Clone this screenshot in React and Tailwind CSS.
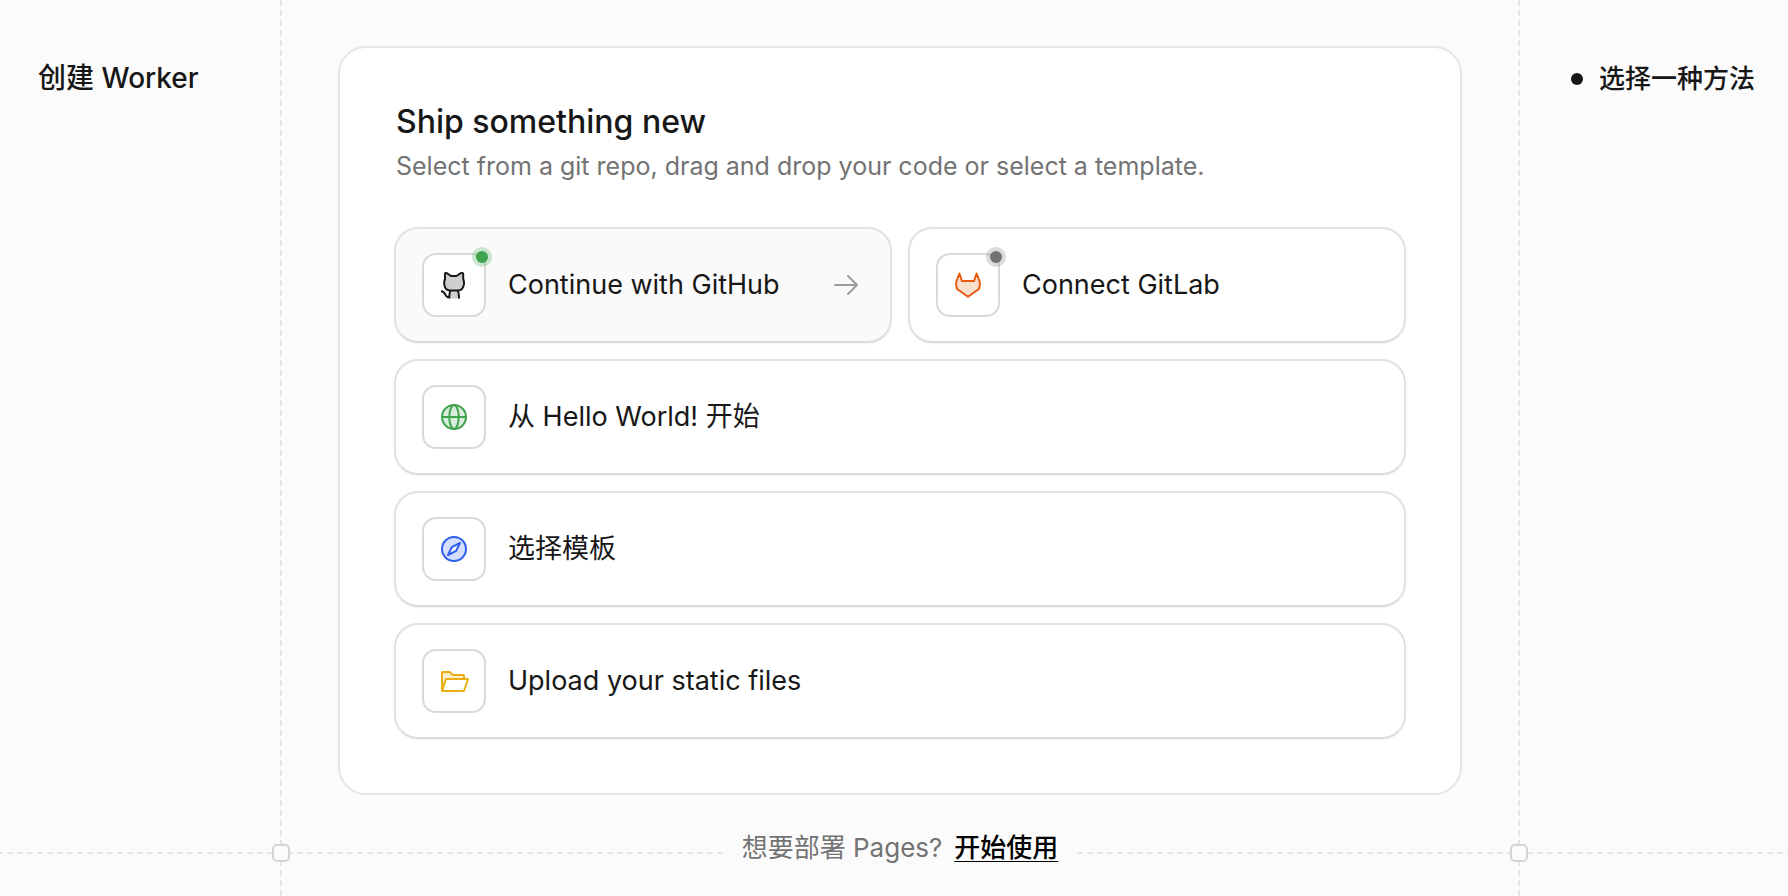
import React from "react";

function Drawing({ className, children }) {
  return (
    <svg viewBox="-16 -16 32 32" className={`size-8 ${className}`} fill="none" stroke="currentColor" strokeWidth="2" aria-hidden="true">
      {children}
    </svg>
  );
}

function CatIcon() {
  return (
    <Drawing className="text-[#171717]">
      <path d="M-4.5 5.5h9V13.500h-9z" fill="#cfcfcf" stroke="none" />
      <path
        d="M-9-11C-9-12.2-8.2-12.3-7.2-11.8L-3-9H2.500L6.8-11.8C8-12.3 9.200-12.2 9.200-11V-6C10-4.500 10.100-3 10-1C9.500 3.500 7 5.500 3.500 5.500H-3.500C-7 5.500-9.500 3.500-9.800-1C-9.900-3-9.800-4.500-9-6Z"
        fill="#cfcfcf"
        strokeLinejoin="round"
      />
      <path d="M-3.500 5.500C-4.500 7-4.700 9-4.700 13.500M3.500 5.500C4.700 7 5 9 5 13.500M-13 6.200C-7.500 6-10 12.500-4.700 12.500" />
    </Drawing>
  );
}

function FoxIcon() {
  return (
    <Drawing className="text-[#e8590c]">
      <path
        d="M-8.600-11.500L-11.600-3.500C-12.200-1-12 1.500-11 4L0 11.700L11 4C12 1.500 12.200-1 11.600-3.500L8.600-11.500L6-4H-6Z"
        fill="currentColor"
        fillOpacity="0.2"
        strokeLinejoin="round"
      />
    </Drawing>
  );
}

function GlobeIcon() {
  return (
    <Drawing className="text-[#3fa34d]">
      <circle r="12" fill="currentColor" fillOpacity="0.2" />
      <ellipse rx="4.700" ry="12" />
      <path d="M-12 0H12" />
    </Drawing>
  );
}

function CompassIcon() {
  return (
    <Drawing className="text-[#2f5fee]">
      <circle r="12" fill="currentColor" fillOpacity="0.2" />
      <path d="M6-6L2.200 1.800L-6 6L-2.200-1.800Z" fill="white" strokeLinejoin="round" />
    </Drawing>
  );
}

function FolderIcon() {
  return (
    <Drawing className="text-[#e8ae12]">
      <path d="M-12 10V-8.500C-12-8.800-11.800-9-11.500-9H-4.500L-1-6H9.500Q10-6 10-5.500V-2H-8Z" fill="currentColor" fillOpacity="0.2" stroke="none" />
      <path d="M-12 10V-8.500C-12-8.800-11.800-9-11.500-9H-4.500L-1-6H9.500Q10-6 10-5.500V-2M-12 10L-8-2H14L10 10Z" strokeLinejoin="round" />
    </Drawing>
  );
}

function ArrowIcon() {
  return (
    <Drawing className="ml-auto text-[#9b9b9b]">
      <path d="M-11 0H11M2-9L11 0L2 9" strokeLinecap="round" strokeLinejoin="round" />
    </Drawing>
  );
}

function Option({ icon, label, dot, highlighted }) {
  return (
    <button
      type="button"
      className={`flex items-center rounded-[24px] border-2 border-[#e2e2e2] border-b-[#dcdcdc] py-6 pr-7 pl-[26px] text-left shadow-xs ${highlighted ? "bg-[#fafafa]" : "bg-white"}`}
    >
      <span className="relative mr-[22px] flex size-16 shrink-0 items-center justify-center rounded-[14px] border-2 border-[#d9d9d9] bg-white">
        {icon}
        {dot && (
          <span className={`absolute -top-2 -right-2 flex size-5 items-center justify-center rounded-full ${dot === "green" ? "bg-[#3fa34d]/25" : "bg-[#737373]/25"}`}>
            <span className={`size-3 rounded-full ${dot === "green" ? "bg-[#3fa34d]" : "bg-[#737373]"}`} />
          </span>
        )}
      </span>
      <span className="text-[27px] leading-8 text-[#171717]">{label}</span>
      {highlighted && <ArrowIcon />}
    </button>
  );
}

const verticalDash = "bg-[repeating-linear-gradient(to_bottom,#e5e5e5_0_6px,transparent_6px_10px)]";

function Knot() {
  return <span className="absolute -left-2 bottom-[34px] size-[18px] rounded-[5px] border-2 border-[#d4d4d4] bg-[#fbfbfb]" />;
}

export default function App() {
  return (
    <div className="relative flex min-h-screen bg-[#fbfbfb] font-['Inter','Noto_Sans_CJK_SC',sans-serif] text-[#171717]">
      <div className="absolute inset-x-0 bottom-[42px] h-[2px] bg-[repeating-linear-gradient(to_right,#e5e5e5_0_3px,transparent_3px_7px,#e5e5e5_7px_10px)]" />
      <aside className="w-[280px] shrink-0 pt-[60px] pl-[38px]">
        <h1 className="text-[28px] leading-9 font-medium">创建 Worker</h1>
      </aside>
      <div className={`relative w-[2px] shrink-0 ${verticalDash}`}>
        <Knot />
      </div>
      <main className="relative flex min-w-0 flex-1 flex-col px-14 pt-[46px]">
        <section className="rounded-[28px] border-2 border-[#e5e5e5] bg-white p-[54px]">
          <h2 className="pl-[2px] text-[32px] leading-10 font-medium">Ship something new</h2>
          <p className="mt-[6px] pl-[2px] text-[25px] leading-9 text-[#737373]">
            Select from a git repo, drag and drop your code or select a template.
          </p>
          <div className="mt-[43px] flex flex-col gap-4">
            <div className="grid grid-cols-2 gap-4">
              <Option icon={<CatIcon />} label="Continue with GitHub" dot="green" highlighted />
              <Option icon={<FoxIcon />} label="Connect GitLab" dot="gray" />
            </div>
            <Option icon={<GlobeIcon />} label="从 Hello World! 开始" />
            <Option icon={<CompassIcon />} label="选择模板" />
            <Option icon={<FolderIcon />} label="Upload your static files" />
          </div>
        </section>
        <p className="mt-[35px] self-center bg-[#fbfbfb] px-4 text-[26px] leading-9 text-[#737373]">
          想要部署 Pages?
          <a href="#pages" className="ml-3 font-medium text-black underline decoration-1 underline-offset-4">开始使用</a>
        </p>
      </main>
      <div className={`relative w-[2px] shrink-0 ${verticalDash}`}>
        <Knot />
      </div>
      <aside className="w-[268px] shrink-0 pt-[61px]">
        <ol>
          <li className="flex items-center justify-end gap-4 pr-[33px] text-[26px] leading-9 font-medium">
            <span className="size-3 rounded-full bg-[#171717]" />
            选择一种方法
          </li>
        </ol>
      </aside>
    </div>
  );
}
